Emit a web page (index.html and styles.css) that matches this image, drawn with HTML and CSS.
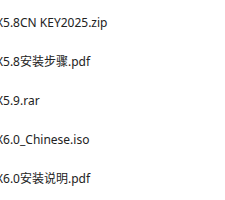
FILE: index.html
```html
<!DOCTYPE html>
<html lang="zh">
<head>
<meta charset="utf-8">
<link rel="stylesheet" href="styles.css">
</head>
<body>
<ul class="files">
  <li class="file"><span class="name">X5.8CN KEY2025.zip</span></li>
  <li class="file"><span class="name">X5.8安装步骤.pdf</span></li>
  <li class="file"><span class="name">X5.9.rar</span></li>
  <li class="file"><span class="name">X6.0_Chinese.iso</span></li>
  <li class="file"><span class="name">X6.0安装说明.pdf</span></li>
</ul>
</body>
</html>
```
FILE: styles.css
```css
html, body {
  margin: 0;
  padding: 0;
  background: #ffffff;
  overflow: hidden;
}
.files {
  list-style: none;
  margin: 0;
  padding: 3px 0 0 0;
  display: flex;
  flex-direction: column;
}
.file {
  height: 38.9px;
  display: flex;
  align-items: center;
  overflow: hidden;
}
.name {
  margin-left: -4px;
  font-family: "Noto Sans", "Noto Sans CJK SC", sans-serif;
  font-size: 12px;
  color: #222222;
  white-space: nowrap;
}
```
